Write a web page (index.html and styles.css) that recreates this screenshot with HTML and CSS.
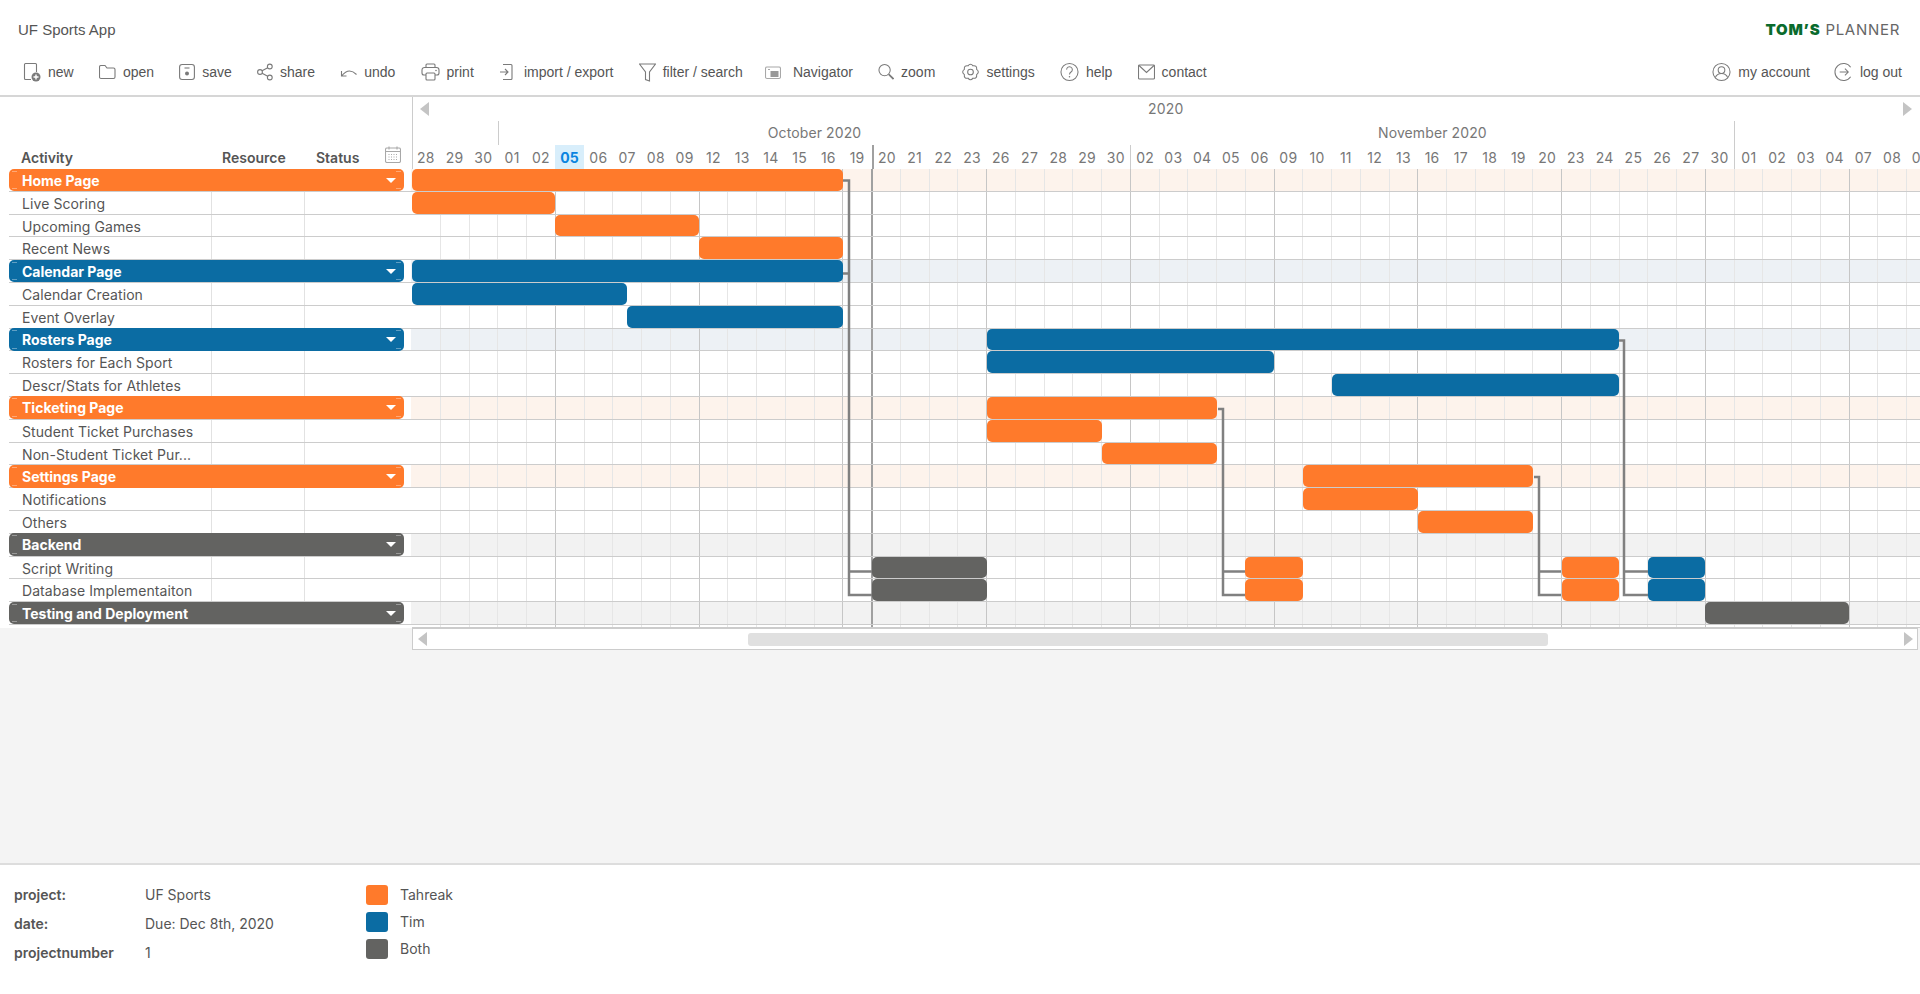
FILE: index.html
```html
<!DOCTYPE html>
<html lang="en">
<head>
<meta charset="utf-8">
<title>UF Sports App</title>
<link rel="stylesheet" href="styles.css">
</head>
<body>
<header class="top">
  <div class="titlebar">
    <span class="title">UF Sports App</span>
    <span class="logo"><b>TOM’S</b> PLANNER</span>
  </div>
  <nav class="toolbar">
    <a class="tool"><svg class="ic" width="18" height="20" viewBox="0 0 18 20"><path d="M8 17.500H2.500a1 1 0 0 1-1-1V2.500a1 1 0 0 1 1-1h10a1 1 0 0 1 1 1V10"/><circle class="solid" cx="13" cy="15" r="4.500"/><path class="white" d="M13 12.500v5M10.500 15h5"/></svg>new</a>
    <a class="tool"><svg class="ic" width="17" height="20" viewBox="0 0 17 20"><path d="M.5 5a1.500 1.500 0 0 1 1.500-1.500h4l2 2.500h6.500a1.500 1.500 0 0 1 1.500 1.500v7.500a1.500 1.500 0 0 1-1.500 1.500H2a1.500 1.500 0 0 1-1.500-1.500z"/></svg>open</a>
    <a class="tool"><svg class="ic" width="16" height="20" viewBox="0 0 16 20"><rect x=".6" y="2.500" width="14.800" height="15" rx="2.500"/><path d="M5.500 6h5"/><circle class="solid" cx="8" cy="11.500" r="2"/></svg>save</a>
    <a class="tool"><svg class="ic" width="16" height="20" viewBox="0 0 16 20"><circle cx="12.800" cy="4.500" r="2.400"/><circle cx="3" cy="10" r="2.400"/><circle cx="12.800" cy="15.500" r="2.400"/><path d="M5.100 8.800l5.600-3.100M5.100 11.200l5.600 3.100"/></svg>share</a>
    <a class="tool"><svg class="ic" width="17" height="20" viewBox="0 0 17 20"><path d="M1.500 9v5h5M1.500 14c2.500-3 5-5 8-5 3 0 5 1.500 7 3.500"/></svg>undo</a>
    <a class="tool"><svg class="ic" width="19" height="20" viewBox="0 0 19 20"><path d="M5 13H3a2 2 0 0 1-2-2V8a2.500 2.500 0 0 1 2.500-2.500h12A2.500 2.500 0 0 1 18 8v3a2 2 0 0 1-2 2h-2M5 5.500V3a1 1 0 0 1 1-1h7a1 1 0 0 1 1 1v2.500"/><rect x="5" y="11" width="9" height="7" rx="1"/><circle class="solid" cx="15" cy="8.500" r=".8"/></svg>print</a>
    <a class="tool wide"><svg class="ic" width="14" height="20" viewBox="0 0 14 20"><path d="M4 2.500h8a1 1 0 0 1 1 1v13a1 1 0 0 1-1 1H4M1 10h8M6 7l3 3-3 3"/></svg>import / export</a>
    <a class="tool"><svg class="ic" width="17" height="20" viewBox="0 0 17 20"><path d="M.5 2h16l-6 8v9l-4-1.500V10z"/></svg>filter / search</a>
    <a class="tool nav"><svg class="ic" width="16" height="20" viewBox="0 0 16 20"><rect class="thin" x=".5" y="5" width="15" height="11.500" rx="1.500"/><rect class="solidbox" x="5.500" y="9" width="8" height="6"/><path class="thin" d="M3 7.500h2"/></svg>Navigator</a>
    <a class="tool"><svg class="ic" width="16" height="20" viewBox="0 0 17 20"><circle cx="7" cy="8" r="6"/><path class="heavy" d="M11.500 12.500l5 5"/></svg>zoom</a>
    <a class="tool"><svg class="ic" width="19" height="20" viewBox="0 0 20 20"><path d="M16.470 12.680Q17.070 17.070 12.680 16.470Q10 20 7.320 16.470Q2.930 17.070 3.530 12.680Q0 10 3.530 7.320Q2.930 2.930 7.320 3.530Q10 0 12.680 3.530Q17.070 2.930 16.470 7.320Q20 10 16.470 12.680Z"/><circle cx="10" cy="10" r="3"/></svg>settings</a>
    <a class="tool"><svg class="ic" width="19" height="20" viewBox="0 0 20 20"><circle cx="10" cy="10" r="9"/><path d="M7 7.500a3 3 0 1 1 4.600 2.500c-1 .7-1.600 1.200-1.600 2.500"/><circle class="solid" cx="10" cy="15" r=".8"/></svg>help</a>
    <a class="tool"><svg class="ic" width="17" height="20" viewBox="0 0 17 20"><rect x=".5" y="3" width="16" height="14" rx="1"/><path d="M1 3.500l7.500 7 7.500-7"/></svg>contact</a>
    <div class="account">
      <a class="tool"><svg class="ic" width="19" height="20" viewBox="0 0 20 20"><circle cx="10" cy="10" r="9"/><circle cx="10" cy="8" r="3.500"/><path d="M3.500 16c1-3 3.500-4.500 6.500-4.500s5.500 1.500 6.500 4.500"/></svg>my account</a>
      <a class="tool"><svg class="ic" width="19" height="20" viewBox="0 0 20 20"><path d="M17.500 5a9 9 0 1 0 0 10"/><path d="M6 10h9M11.500 6.500L15 10l-3.500 3.500"/></svg>log out</a>
    </div>
  </nav>
</header>

<section class="head">
  <div class="head-left">
    <span class="h-activity">Activity</span>
    <span class="h-resource">Resource</span>
    <span class="h-status">Status</span>
    <svg class="ic cal" width="16" height="17" viewBox="0 0 16 17"><rect class="thin" x=".5" y="2" width="15" height="14.500" rx="1.500"/><path class="thin" d="M.5 5.500h15M4 .5v3M12 .5v3"/><path class="dots" d="M3.500 8.500h9M3.500 11h9M3.500 13.500h9"/></svg>
  </div>
  <div class="head-right">
    <div class="year"><i class="tri tri-l"></i><span class="year-label">2020</span><i class="tri tri-r"></i></div>
    <div class="months">
      <span class="m m-sep"></span>
      <span class="m m-oct">October 2020</span>
      <span class="m m-nov">November 2020</span>
      <span class="m m-dec"></span>
    </div>
    <div class="days">
      <span>28</span><span>29</span><span>30</span><span>01</span><span>02</span><span class="today">05</span><span>06</span><span>07</span><span>08</span><span>09</span><span>12</span><span>13</span><span>14</span><span>15</span><span>16</span><span>19</span><span class="now">20</span><span>21</span><span>22</span><span>23</span><span>26</span><span>27</span><span>28</span><span>29</span><span>30</span><span class="month-start">02</span><span>03</span><span>04</span><span>05</span><span>06</span><span>09</span><span>10</span><span>11</span><span>12</span><span>13</span><span>16</span><span>17</span><span>18</span><span>19</span><span>20</span><span>23</span><span>24</span><span>25</span><span>26</span><span>27</span><span>30</span><span class="month-start">01</span><span>02</span><span>03</span><span>04</span><span>07</span><span>08</span><span>09</span>
    </div>
  </div>
</section>

<main class="main">
  <div class="sheet">
    <div class="cols">
      <i class="first"></i><i></i><i></i><i></i><i></i><i class="wk"></i><i></i><i></i><i></i><i></i><i class="wk"></i><i></i><i></i><i></i><i></i><i class="wk"></i><i class="now"></i><i></i><i></i><i></i><i class="wk"></i><i></i><i></i><i></i><i></i><i class="wk"></i><i></i><i></i><i></i><i></i><i class="wk"></i><i></i><i></i><i></i><i></i><i class="wk"></i><i></i><i></i><i></i><i></i><i class="wk"></i><i></i><i></i><i></i><i></i><i class="wk"></i><i></i><i></i><i></i><i></i><i class="wk"></i><i></i><i></i><i></i>
    </div>

    <div class="row g-o"><div class="side"><div class="gbox">Home Page<i class="drop"></i></div></div><div class="track"><b class="bar o" style="grid-column:1/31"></b></div></div>
    <div class="row"><div class="side"><span class="name">Live Scoring</span><span class="res"></span><span class="sta"></span></div><div class="track"><b class="bar o" style="grid-column:1/11"></b></div></div>
    <div class="row"><div class="side"><span class="name">Upcoming Games</span><span class="res"></span><span class="sta"></span></div><div class="track"><b class="bar o" style="grid-column:11/21"></b></div></div>
    <div class="row"><div class="side"><span class="name">Recent News</span><span class="res"></span><span class="sta"></span></div><div class="track"><b class="bar o" style="grid-column:21/31"></b></div></div>

    <div class="row g-b"><div class="side"><div class="gbox">Calendar Page<i class="drop"></i></div></div><div class="track"><b class="bar b" style="grid-column:1/31"></b></div></div>
    <div class="row"><div class="side"><span class="name">Calendar Creation</span><span class="res"></span><span class="sta"></span></div><div class="track"><b class="bar b" style="grid-column:1/16"></b></div></div>
    <div class="row"><div class="side"><span class="name">Event Overlay</span><span class="res"></span><span class="sta"></span></div><div class="track"><b class="bar b" style="grid-column:16/31"></b></div></div>

    <div class="row g-b"><div class="side"><div class="gbox">Rosters Page<i class="drop"></i></div></div><div class="track"><b class="bar b" style="grid-column:41/85"></b></div></div>
    <div class="row"><div class="side"><span class="name">Rosters for Each Sport</span><span class="res"></span><span class="sta"></span></div><div class="track"><b class="bar b" style="grid-column:41/61"></b></div></div>
    <div class="row"><div class="side"><span class="name">Descr/Stats for Athletes</span><span class="res"></span><span class="sta"></span></div><div class="track"><b class="bar b" style="grid-column:65/85"></b></div></div>

    <div class="row g-o"><div class="side"><div class="gbox">Ticketing Page<i class="drop"></i></div></div><div class="track"><b class="bar o" style="grid-column:41/57"></b></div></div>
    <div class="row"><div class="side"><span class="name">Student Ticket Purchases</span><span class="res"></span><span class="sta"></span></div><div class="track"><b class="bar o" style="grid-column:41/49"></b></div></div>
    <div class="row"><div class="side"><span class="name">Non-Student Ticket Pur...</span><span class="res"></span><span class="sta"></span></div><div class="track"><b class="bar o" style="grid-column:49/57"></b></div></div>

    <div class="row g-o"><div class="side"><div class="gbox">Settings Page<i class="drop"></i></div></div><div class="track"><b class="bar o" style="grid-column:63/79"></b></div></div>
    <div class="row"><div class="side"><span class="name">Notifications</span><span class="res"></span><span class="sta"></span></div><div class="track"><b class="bar o" style="grid-column:63/71"></b></div></div>
    <div class="row"><div class="side"><span class="name">Others</span><span class="res"></span><span class="sta"></span></div><div class="track"><b class="bar o" style="grid-column:71/79"></b></div></div>

    <div class="row g-g"><div class="side"><div class="gbox">Backend<i class="drop"></i></div></div><div class="track"></div></div>
    <div class="row"><div class="side"><span class="name">Script Writing</span><span class="res"></span><span class="sta"></span></div><div class="track"><b class="bar g" style="grid-column:33/41"></b><b class="bar o" style="grid-column:59/63"></b><b class="bar o" style="grid-column:81/85"></b><b class="bar b" style="grid-column:87/91"></b></div></div>
    <div class="row"><div class="side"><span class="name">Database Implementaiton</span><span class="res"></span><span class="sta"></span></div><div class="track"><b class="bar g" style="grid-column:33/41"></b><b class="bar o" style="grid-column:59/63"></b><b class="bar o" style="grid-column:81/85"></b><b class="bar b" style="grid-column:87/91"></b></div></div>
    <div class="row g-g"><div class="side"><div class="gbox">Testing and Deployment<i class="drop"></i></div></div><div class="track"><b class="bar g" style="grid-column:91/101"></b></div></div>
    <div class="row tail"><div class="side"></div><div class="track"></div></div>

    <svg class="links" width="1508" height="460" viewBox="412 169 1508 460">
      <path d="M843 180.500h6V595h23M849 273.500h-6M849 571.500h23"/>
      <path d="M1218 409h5V595h22M1223 571.500h22"/>
      <path d="M1534 477h5V595h22M1539 571.500h22"/>
      <path d="M1619 340.500h5V595h24M1624 571.500h24"/>
    </svg>
  </div>
  <div class="hscroll"><i class="tri tri-l"></i><span class="thumb"></span><i class="tri tri-r"></i></div>
</main>

<footer class="foot">
  <dl class="info">
    <div class="info-row"><dt>project:</dt><dd>UF Sports</dd></div>
    <div class="info-row"><dt>date:</dt><dd>Due: Dec 8th, 2020</dd></div>
    <div class="info-row"><dt>projectnumber</dt><dd>1</dd></div>
  </dl>
  <ul class="legend">
    <li><i class="sw o"></i>Tahreak</li>
    <li><i class="sw b"></i>Tim</li>
    <li><i class="sw g"></i>Both</li>
  </ul>
</footer>
</body>
</html>
```
FILE: styles.css
```css
* { box-sizing: border-box; }
html, body { margin: 0; height: 100%; }
body {
  width: 1920px;
  height: 994px;
  overflow: hidden;
  display: flex;
  flex-direction: column;
  background: #fff;
  color: #555;
  font: 14px/1 Inter, "Liberation Sans", sans-serif;
}

/* top bar */
.top {
  height: 97px;
  flex: none;
  border-bottom: 2px solid #d6d6d6;
  font-family: "Liberation Sans", Arial, sans-serif;
  color: #555;
}
.titlebar {
  height: 60px;
  padding: 22px 20px 0 18px;
  display: flex;
  justify-content: space-between;
  align-items: flex-start;
}
.title { font-size: 15px; line-height: 16px; }
.logo {
  font-family: Inter, sans-serif;
  font-size: 15px;
  line-height: 16px;
  font-weight: 400;
  letter-spacing: .7px;
  color: #666;
}
.logo b { color: #0a6b2d; font-weight: 900; letter-spacing: .8px; }
.toolbar {
  height: 24px;
  padding: 0 18px 0 23px;
  display: flex;
  align-items: center;
  gap: 25.2px;
  font-size: 14px;
}
.tool { display: flex; align-items: center; gap: 7px; white-space: nowrap; }
.tool.wide { gap: 11px; }
.tool.nav { gap: 12px; margin-left: -3px; }
.account { margin-left: auto; display: flex; gap: 24px; }
.ic { flex: none; fill: none; stroke: #7a7a7a; stroke-width: 1.1; }
.ic .solid { fill: #7a7a7a; stroke: none; }
.ic .white { stroke: #fff; stroke-width: 1.4; }
.ic .heavy { stroke-width: 1.8; }
.ic .thin { stroke: #a8a8a8; }
.ic .solidbox { fill: #999; stroke: none; }
.ic .dots { stroke: #aaa; stroke-dasharray: 1 1.5; }

/* chart head */
.head { height: 72px; flex: none; display: flex; color: #777; }
.head-left {
  width: 411.5px;
  flex: none;
  display: flex;
  align-items: flex-end;
  padding-bottom: 4px;
  font-weight: 600;
  color: #555;
}
.h-activity { margin-left: 21px; width: 201px; }
.h-resource { width: 94px; }
.h-status { width: 69px; }
.cal { margin-bottom: 2px; }
.head-right {
  flex: 1;
  min-width: 0;
  overflow: hidden;
  border-left: 1px solid #ccc;
  display: flex;
  flex-direction: column;
}
.year {
  height: 24px;
  display: flex;
  align-items: center;
  justify-content: space-between;
  padding: 0 8px 0 7px;
}
.year-label { font-size: 14px; letter-spacing: .2px; }
.tri { display: block; width: 0; height: 0; border: 7px solid transparent; }
.tri-l { border-left: 0; border-right: 9px solid #c4c4c4; }
.tri-r { border-right: 0; border-left: 9px solid #c4c4c4; }
.months { height: 24px; display: flex; align-items: center; }
.m { flex: none; text-align: center; height: 100%; line-height: 24px; letter-spacing: .1px; }
.m-sep { width: 85.2px; }
.m-oct { width: 632.7px; border-left: 1px solid #ccc; }
.m-nov { width: 604px; }
.m-dec { width: 200px; border-left: 1px solid #ccc; }
.days { height: 24px; display: flex; margin-left: -1px; }
.days span {
  flex: none;
  width: 28.76px;
  text-align: center;
  line-height: 25px;
  letter-spacing: .3px;
}
.days .today { background: #d8eefb; color: #0a84e0; font-weight: 700; }
.days .now { border-left: 2px solid #a0a0a0; }
.days .month-start { border-left: 1px solid #ccc; }

/* sheet */
.main {
  flex: 1;
  background: #f4f4f4;
  min-height: 0;
  display: flex;
  flex-direction: column;
}
.sheet { position: relative; overflow: hidden; background: #fff; flex: none; }
.row { display: flex; height: 22.8px; }
.side {
  margin-left: 9px;
  width: 402.5px;
  flex: none;
  display: flex;
  align-items: center;
  border-bottom: 1px solid #ccc;
}
.name {
  width: 201.5px;
  padding-left: 13px;
  white-space: nowrap;
  line-height: 24px;
  height: 100%;
  letter-spacing: .08px;
}
.res { width: 93.5px; height: 100%; border-left: 1px solid #e2e2e2; }
.sta { flex: 1; height: 100%; border-left: 1px solid #e2e2e2; }
.track {
  flex: 1;
  min-width: 0;
  display: grid;
  grid-template-columns: repeat(106, 14.38px);
  grid-template-rows: 100%;
  border-bottom: 1px solid #ccc;
  overflow: hidden;
  position: relative;
  z-index: 2;
}
.g-o { background: linear-gradient(to right, transparent 411.5px, #fdf3ec 411.5px); }
.g-b { background: linear-gradient(to right, transparent 411.5px, #edf1f5 411.5px); }
.g-g { background: linear-gradient(to right, transparent 411.5px, #f2f2f2 411.5px); }
.gbox {
  --mark: linear-gradient(rgba(255, 255, 255, .35), rgba(255, 255, 255, .35));
  width: 395px;
  height: calc(100% + 1px);
  border-radius: 5px;
  color: #fff;
  font-weight: 700;
  padding-left: 13px;
  line-height: 24px;
  position: relative;
  background-image: var(--mark), var(--mark), var(--mark), var(--mark);
  background-size: 5px 1px;
  background-repeat: no-repeat;
  background-position: 3px 2px, 3px calc(100% - 2px), calc(100% - 3px) 2px, calc(100% - 3px) calc(100% - 2px);
}
.g-o .gbox { background-color: #ff7a2b; }
.g-b .gbox { background-color: #0b6ca3; }
.g-g .gbox { background-color: #636361; }
.drop {
  position: absolute;
  right: 8px;
  top: 9px;
  width: 0;
  height: 0;
  border-style: solid;
  border-width: 5px 5px 0;
  border-color: #fff transparent transparent;
}
.bar { display: block; height: 100%; border-radius: 5px; grid-row: 1; }
.o { background: #ff7a2b; }
.b { background: #0b6ca3; }
.g { background: #636361; }
.tail { height: 3.2px; }
.tail .side { border-bottom: 0; }
.cols {
  position: absolute;
  left: 411px;
  top: 0;
  bottom: 0;
  right: 0;
  display: flex;
  z-index: 1;
}
.cols i { flex: none; width: 28.76px; border-left: 1px solid #e6e6e6; }
.cols .first { border-left: 0; }
.cols .wk { border-left-color: #c6c6c6; }
.cols .now { border-left: 2px solid #a0a0a0; }
.links {
  position: absolute;
  left: 412px;
  top: 0;
  z-index: 3;
  fill: none;
  stroke: #808080;
  stroke-width: 2.5;
}

/* horizontal scroll */
.hscroll {
  margin: 0 2px 0 412px;
  height: 22px;
  flex: none;
  background: #fff;
  border: 1px solid #ccc;
  display: flex;
  align-items: center;
  padding: 0 4px 0 5px;
}
.thumb { width: 800px; height: 13px; margin-left: 321px; background: #e0e0e0; border-radius: 3px; }
.hscroll .tri-r { margin-left: auto; }

/* footer */
.foot {
  height: 131px;
  flex: none;
  border-top: 2px solid #ddd;
  display: flex;
  padding: 23px 0 0 14px;
}
.info { width: 352px; margin: 0; }
.info-row { display: flex; height: 29px; }
.info-row dt { width: 131px; font-weight: 600; }
.info-row dd { margin: 0; }
.legend { list-style: none; margin: -3px 0 0; padding: 0; }
.legend li { display: flex; height: 27px; align-items: flex-start; line-height: 20px; }
.sw { width: 22px; height: 20px; border-radius: 3px; margin-right: 12px; }
```
